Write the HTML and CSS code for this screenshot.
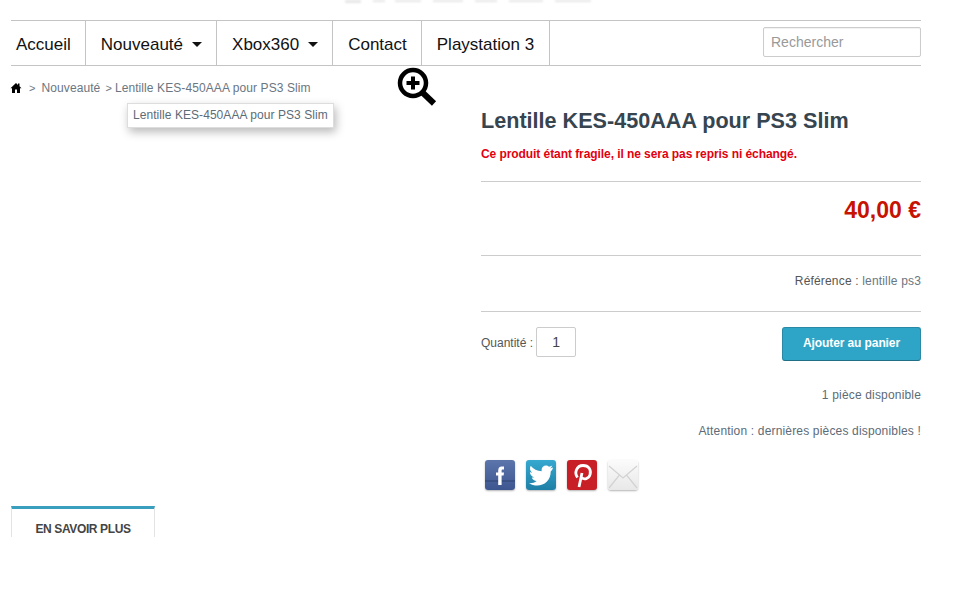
FILE: index.html
```html
<!DOCTYPE html>
<html lang="fr">
<head>
  <meta charset="UTF-8" />
  <title>Lentille KES-450AAA pour PS3 Slim</title>
  <link rel="stylesheet" href="styles.css">
</head>
<body>
  <div class="page">
    <header class="logo-strip">
      <svg class="logo-cut" viewBox="0 0 250 6" width="250" height="6">
        <rect x="0" y="0" width="16" height="3" rx="1"/>
        <rect x="28" y="0" width="12" height="2"/>
        <rect x="50" y="0" width="26" height="2"/>
        <rect x="88" y="0" width="30" height="2"/>
        <rect x="130" y="0" width="22" height="2"/>
        <rect x="164" y="0" width="34" height="2"/>
        <rect x="210" y="0" width="36" height="2"/>
      </svg>
    </header>

    <nav class="menu">
      <ul>
        <li class="first"><a href="#">Accueil</a></li>
        <li><a href="#" class="has-sub">Nouveauté</a></li>
        <li><a href="#" class="has-sub">Xbox360</a></li>
        <li><a href="#">Contact</a></li>
        <li class="last"><a href="#">Playstation 3</a></li>
      </ul>
      <input class="search" type="text" placeholder="Rechercher">
    </nav>

    <div class="breadcrumb">
      <svg class="home" viewBox="0 0 12 12" width="12" height="12"><path d="M6 1 L0.5 6.2 L2 6.2 L2 11 L5 11 L5 7.5 L7 7.5 L7 11 L10 11 L10 6.2 L11.5 6.2 L9.5 4.3 L9.5 1.5 L8 1.5 L8 2.9 Z" fill="#000"/></svg>
      <span class="sep">&gt;</span>
      <a href="#">Nouveauté</a>
      <span class="sep last">&gt;</span>
      <span>Lentille KES-450AAA pour PS3 Slim</span>
    </div>

    <main class="product">
      <section class="picture">
        <div class="img-title">Lentille KES-450AAA pour PS3 Slim</div>
        <svg class="zoom-icon" viewBox="0 0 40 40" width="40" height="40">
          <circle cx="16" cy="16" r="13" fill="#fff" stroke="#000" stroke-width="4.5"/>
          <path d="M25.5 25.5 L37 36.5" stroke="#000" stroke-width="6"/>
          <path d="M9.5 16 H22.5 M16 9.5 V22.5" stroke="#000" stroke-width="4"/>
        </svg>
      </section>

      <section class="infos">
        <h1>Lentille KES-450AAA pour PS3 Slim</h1>
        <p class="warning">Ce produit étant fragile, il ne sera pas repris ni échangé.</p>
        <div class="price">40,00 €</div>
        <div class="reference">Référence : <span>lentille ps3</span></div>
        <div class="buy">
          <label class="qty">Quantité : <input type="text" value="1"></label>
          <button class="add" type="button">Ajouter au panier</button>
        </div>
        <p class="stock">1 pièce disponible</p>
        <p class="stock alert">Attention : dernières pièces disponibles !</p>
        <div class="share">
          <a href="#" class="ico fb"><svg viewBox="0 0 30 30" width="30" height="30"><path d="M0 21 H30" stroke="#2c4272" stroke-width="1"/><path d="M13.2 25 V15.5 H11 V12.5 H13.2 V10.5 C13.2 8 14.5 6.5 16.8 6.5 H19 V9.6 H17.8 C16.9 9.6 16.6 10 16.6 10.8 V12.5 H19 L18.6 15.5 H16.6 V25 Z" fill="#fff"/></svg></a>
          <a href="#" class="ico tw"><svg viewBox="0 0 30 30" width="30" height="30"><path d="M27 7.5 C26 8 25 8.3 24 8.4 C25.1 7.7 25.9 6.7 26.3 5.5 C25.3 6.1 24.1 6.6 23 6.8 C20.5 4.2 15.6 5.6 15.6 10 L15.6 11.3 C11.2 11.1 7.4 9 4.7 5.8 C3.3 8.3 4 11.2 6.2 12.8 C5.4 12.8 4.6 12.5 3.9 12.1 C3.9 14.6 5.7 16.8 8 17.3 C7.3 17.5 6.5 17.5 5.8 17.4 C6.5 19.5 8.4 21 10.7 21 C8.5 22.7 5.7 23.5 3 23.2 C12.5 29 25 23.5 24.7 11.5 C25.7 10.7 26.5 9.6 27 7.5 Z" fill="#fff"/></svg></a>
          <a href="#" class="ico pi"><svg viewBox="0 0 30 30" width="30" height="30"><path d="M12 27 L15 13 M10.5 17.5 C7 13 9.5 5.5 16 5.5 C22 5.5 24.3 10 23.1 14.5 C22 19 17 20 14.5 17.5" fill="none" stroke="#fff" stroke-width="2.8"/></svg></a>
          <a href="#" class="ico ml"><svg viewBox="0 0 30 30" width="30" height="30"><path d="M1 6 L15 18 L29 6 M1 28 L11.5 15 M29 28 L18.5 15" fill="none" stroke="#d2d2d2" stroke-width="1.2"/></svg></a>
        </div>
      </section>
    </main>

    <div class="tabs">
      <div class="tab">EN SAVOIR PLUS</div>
    </div>
  </div>
</body>
</html>
```

FILE: styles.css
```css
* { margin: 0; padding: 0; box-sizing: border-box; }
html, body { overflow: hidden; }
body {
  font-family: "Liberation Sans", Arial, sans-serif;
  background: #fff;
  color: #5d6b77;
  font-size: 12px;
  height: 614px;
}
.page { width: 910px; margin-left: 11px; }

.logo-strip { height: 20px; overflow: hidden; padding-left: 334px; }
.logo-cut { display: block; fill: #e6e6e6; filter: blur(1px); }

.menu {
  height: 46px;
  border-top: 1px solid #c4c4c4;
  border-bottom: 1px solid #c4c4c4;
  display: flex;
  justify-content: space-between;
  align-items: flex-start;
}
.menu ul { display: flex; list-style: none; height: 44px; }
.menu li { border-right: 1px solid #c4c4c4; padding: 0 14px 0 15px; }
.menu li.first { padding-left: 5px; }
.menu li.last { padding-right: 15px; }
.menu a {
  color: #111;
  text-decoration: none;
  font-size: 17px;
  line-height: 46px;
  padding-top: 1px;
  height: 44px;
  display: block;
}
.menu a.has-sub::after {
  content: "";
  display: inline-block;
  margin-left: 9px;
  vertical-align: 3px;
  border-top: 5px solid #111;
  border-left: 5px solid transparent;
  border-right: 5px solid transparent;
}
.search {
  width: 158px;
  height: 30px;
  margin-top: 6px;
  padding: 0 7px;
  border: 1px solid #ccc;
  border-radius: 2px;
  box-shadow: inset 0 1px 1px rgba(0,0,0,.06);
  font: 14px "Liberation Sans", Arial, sans-serif;
}
.search::placeholder { color: #999; opacity: 1; }

.breadcrumb {
  display: flex;
  align-items: center;
  height: 14px;
  margin-top: 15px;
  color: #6a7681;
  letter-spacing: .09px;
}
.breadcrumb a { color: #6a7681; text-decoration: none; }
.breadcrumb .home { margin-left: -1px; }
.breadcrumb .sep { margin: 0 6px 0 7px; font-size: 11px; }
.breadcrumb .sep.last { margin: 0 3px 0 5px; }

.product { position: relative; display: flex; justify-content: space-between; }
.picture { width: 440px; }
.img-title {
  position: absolute;
  left: 116px;
  top: 8px;
  padding: 0 5px;
  height: 25px;
  line-height: 23px;
  background: #fff;
  border: 1px solid #ddd;
  box-shadow: 2px 4px 10px rgba(0,0,0,.28);
  white-space: nowrap;
  letter-spacing: .06px;
}
.zoom-icon { position: absolute; left: 386px; top: -28px; }

.infos { width: 440px; padding-top: 13px; }
.infos h1 { font-size: 21.6px; line-height: 26px; font-weight: bold; color: #36454f; }
.warning {
  margin-top: 13px;
  height: 35px;
  line-height: 15px;
  font-weight: bold;
  color: #e3000f;
  border-bottom: 1px solid #ccc;
  letter-spacing: -.07px;
}
.price {
  height: 74px;
  padding-top: 15px;
  text-align: right;
  font-size: 23px;
  line-height: 26px;
  font-weight: bold;
  color: #c71200;
  border-bottom: 1px solid #ccc;
}
.reference {
  height: 56px;
  line-height: 50px;
  text-align: right;
  color: #555;
  border-bottom: 1px solid #ccc;
  letter-spacing: .17px;
}
.reference span { color: #6a7681; }
.buy {
  display: flex;
  justify-content: space-between;
  align-items: flex-start;
  padding-top: 15px;
  height: 76px;
}
.qty { display: flex; align-items: center; gap: 3px; height: 30px; color: #555; padding-top: 1px; }
.qty input {
  width: 40px;
  height: 30px;
  margin-top: -1px;
  border: 1px solid #ccc;
  border-radius: 2px;
  text-align: center;
  color: #444;
  font: 14px "Liberation Sans", Arial, sans-serif;
}
.add {
  width: 139px;
  height: 34px;
  background: #2ea5c6;
  border: 1px solid #2a8aa5;
  border-bottom-color: #1f6f87;
  border-radius: 3px;
  color: #fff;
  font: bold 12px "Liberation Sans", Arial, sans-serif;
  letter-spacing: -.1px;
  padding-bottom: 3px;
}
.stock { text-align: right; line-height: 14px; letter-spacing: .17px; }
.stock.alert { margin-top: 22px; }
.share { display: flex; gap: 11px; margin-top: 22px; padding-left: 4px; }
.ico { display: block; width: 30px; height: 30px; border-radius: 3px; box-shadow: 0 1px 2px rgba(0,0,0,.3); }
.ico svg { display: block; }
.fb { background: linear-gradient(#5c75ab, #3d5690); }
.tw { background: linear-gradient(#35a9d0, #1f7fa6); }
.pi { background: #c71f25; }
.ml { background: linear-gradient(#fbfbfb, #e8e8e8); }

.tabs { height: 31px; overflow: hidden; margin-top: 16px; }
.tab {
  width: 144px;
  height: 40px;
  border-top: 3px solid #3a9fbf;
  border-left: 1px solid #e3e3e3;
  border-right: 1px solid #e3e3e3;
  text-align: center;
  font-weight: bold;
  color: #444;
  padding-top: 13px;
  line-height: 14px;
  letter-spacing: -.38px;
}
```
